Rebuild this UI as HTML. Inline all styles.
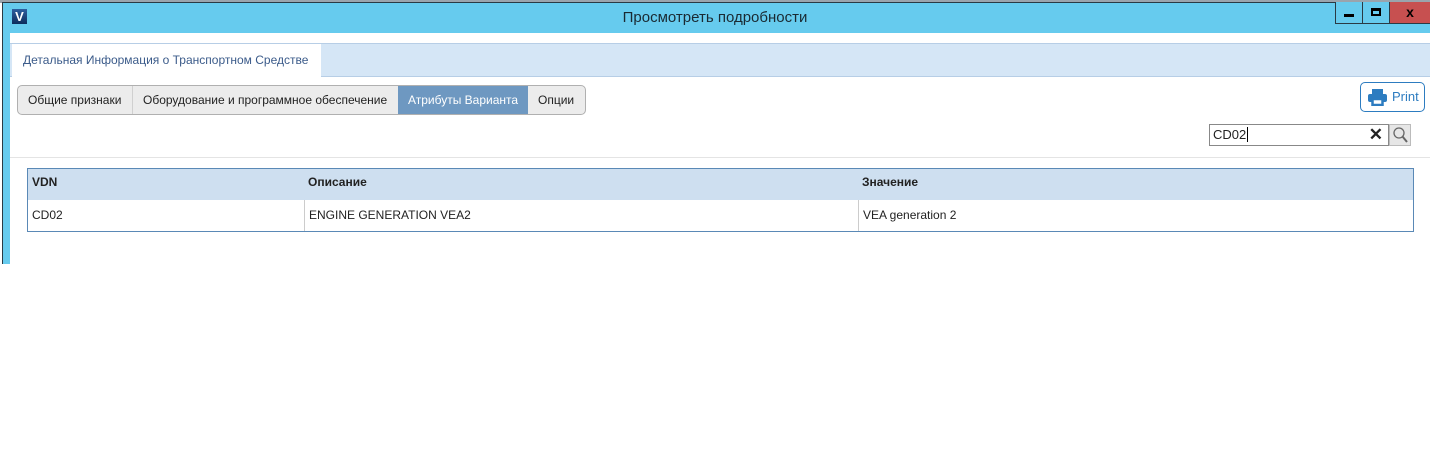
<!DOCTYPE html>
<html><head><meta charset="utf-8"><style>
*{box-sizing:border-box;margin:0;padding:0}
body{width:1430px;height:476px;background:#fff;font-family:"Liberation Sans",Arial,sans-serif;position:relative;overflow:hidden;font-size:12px;color:#222}
.abs{position:absolute}
</style></head><body>
<div class="abs" style="left:0;top:0;width:1430px;height:3px;background:#9aa4ad"></div>
<div class="abs" style="left:2px;top:2px;width:1428px;height:262px;background:#66cbee;border-left:1px solid #2a3a44;border-top:1px solid #2a3a44"></div>
<div class="abs" style="left:0;top:9px;width:1430px;text-align:center;font-size:15px;color:#1a2a33">Просмотреть подробности</div>
<div class="abs" style="left:12px;top:9px;width:15px;height:15px;background:linear-gradient(#2e5fa0,#0d2c5c);color:#fff;font-weight:bold;font-size:13px;line-height:15px;text-align:center">V</div>
<div class="abs" style="left:1335px;top:2px;width:28px;height:22px;border:1px solid #2a3a44;border-top:none;background:#66cbee"><div class="abs" style="left:8px;top:12px;width:10px;height:3px;background:#000"></div></div>
<div class="abs" style="left:1363px;top:2px;width:27px;height:22px;border:1px solid #2a3a44;border-left:none;border-top:none;background:#66cbee"><div class="abs" style="left:8px;top:6px;width:10px;height:8px;border:2px solid #000;border-top-width:3px"></div></div>
<div class="abs" style="left:1390px;top:2px;width:40px;height:22px;background:#c75050;border-bottom:1px solid #2a3a44;text-align:center;font-weight:bold;font-size:14px;line-height:21px;color:#000">x</div>
<div class="abs" style="left:10px;top:33px;width:1420px;height:231px;background:#fff"></div>
<div class="abs" style="left:10px;top:43px;width:1420px;height:34px;background:#d5e6f6;border-top:1px solid #b7cee6;border-bottom:1px solid #b7cee6"></div>
<div class="abs" style="left:12px;top:44px;width:309px;height:33px;background:#fff;color:#3b5b8a;font-size:12px;line-height:33px;padding-left:11px">Детальная Информация о Транспортном Средстве</div>
<div class="abs" style="left:17px;top:85px;width:569px;height:30px;border:1px solid #b0b0b0;border-radius:5px;background:#ececec;overflow:hidden;display:flex;font-size:12px;line-height:28px">
<div style="width:115px;padding-left:10px;border-right:1px solid #d0d0d0">Общие признаки</div>
<div style="width:265px;padding-left:10px">Оборудование и программное обеспечение</div>
<div style="width:130px;padding-left:10px;background:#6e98c1;color:#fff">Атрибуты Варианта</div>
<div style="padding-left:10px">Опции</div>
</div>
<div class="abs" style="left:1360px;top:82px;width:65px;height:30px;border:1px solid #2d7cc0;border-radius:5px;color:#2d7cc0;font-size:13px;line-height:28px;padding-left:31px">Print
<svg class="abs" style="left:7px;top:6px" width="19" height="17" viewBox="0 0 19 17"><rect x="4" y="0" width="11" height="5" fill="#2d7cc0"/><rect x="0" y="5" width="19" height="8" rx="2" fill="#2d7cc0"/><rect x="4.5" y="10" width="10" height="6" fill="#fff" stroke="#2d7cc0" stroke-width="2.5"/></svg></div>
<div class="abs" style="left:1209px;top:124px;width:180px;height:22px;border:1px solid #888;font-size:13px;line-height:20px;padding-left:3px">CD02<span style="border-left:1px solid #000;margin-left:1px"></span><span class="abs" style="right:5px;top:0;font-size:17px;font-weight:bold">✕</span></div>
<div class="abs" style="left:1389px;top:124px;width:22px;height:22px;border:1px solid #bbb;background:#e6e6e6">
<svg width="20" height="20"><circle cx="9" cy="8" r="5" fill="none" stroke="#666" stroke-width="1.3"/><line x1="12.5" y1="11.5" x2="17" y2="17" stroke="#666" stroke-width="2"/></svg></div>
<div class="abs" style="left:10px;top:157px;width:1420px;height:1px;background:#e4e4e4"></div>
<div class="abs" style="left:27px;top:168px;width:1387px;height:64px;border:1px solid #5a89b6">
<div class="abs" style="left:0;top:0;width:1385px;height:31px;background:#cedff0;font-weight:bold;font-size:12px;line-height:26px">
<span class="abs" style="left:4px">VDN</span><span class="abs" style="left:280px">Описание</span><span class="abs" style="left:834px">Значение</span></div>
<div class="abs" style="left:0;top:31px;width:1385px;height:31px;font-size:12px;line-height:30px">
<span class="abs" style="left:4px">CD02</span>
<div class="abs" style="left:276px;top:0;width:1px;height:31px;background:#ccc"></div>
<span class="abs" style="left:281px">ENGINE GENERATION VEA2</span>
<div class="abs" style="left:830px;top:0;width:1px;height:31px;background:#ccc"></div>
<span class="abs" style="left:835px">VEA generation 2</span></div>
</div>
</body></html>
